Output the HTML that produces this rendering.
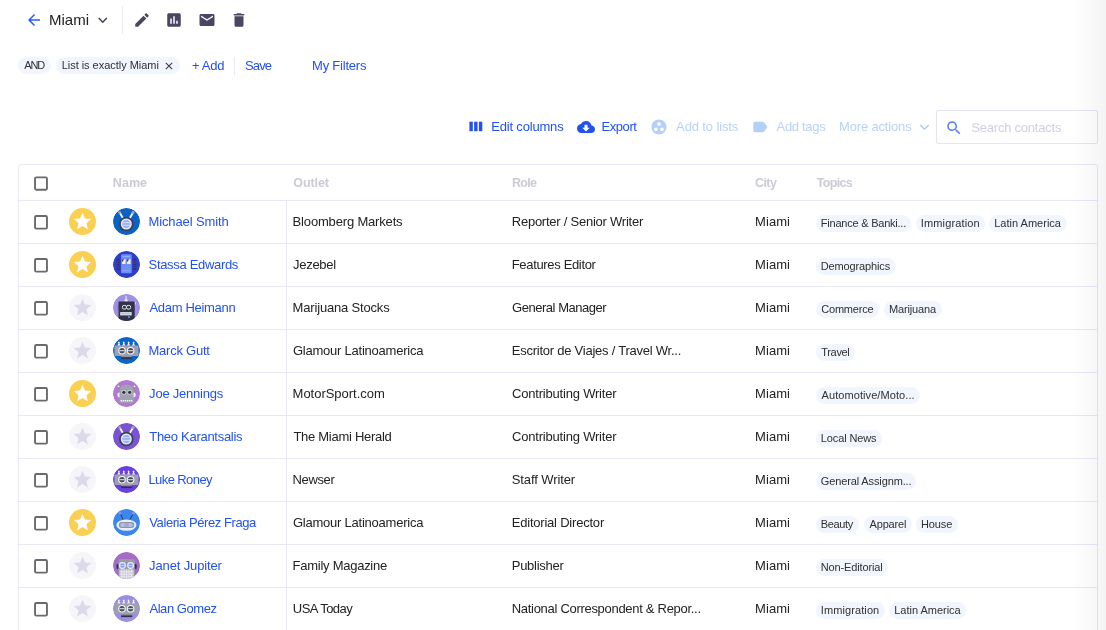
<!DOCTYPE html>
<html><head><meta charset="utf-8">
<style>
*{box-sizing:border-box;margin:0;padding:0}
html,body{width:1106px;height:630px;overflow:hidden;background:#fff}
body{font-family:"Liberation Sans",sans-serif;color:#212121;position:relative;font-size:13px}
.abs{position:absolute;white-space:nowrap}
.t{position:absolute;white-space:nowrap;line-height:16px;font-size:13px}
.title{font-size:15px;line-height:18px;color:#222}
.blue,.name{color:#2251f0}
.lblue{color:#b8d2fb}
.ph{color:#cfcfe6}
.hdr{font-weight:bold;font-size:12.500px;color:#cbcbd5}
.chiptxt,.tagtxt{font-size:11px;color:#303030}
.cell{color:#222}
.hl{position:absolute;left:19px;width:1078px;height:1px;background:#e8e8f6}
.cb{position:absolute;left:34px;width:14px;height:14px;border:2px solid #5f5f5f;border-radius:2px;background:#fff}
.star{position:absolute;left:69px;width:27px;height:27px;border-radius:50%}
.star.on{background:#fad053}
.star.off{background:#f6f5f9}
.av{position:absolute;left:113px;width:27px;height:27px;border-radius:50%;overflow:hidden}
.pill{position:absolute;height:17px;border-radius:8.500px;background:#f1f5fd}
</style></head><body>

<!-- top bar -->
<svg class="abs" style="left:25px;top:11px" width="18" height="18" viewBox="0 0 24 24"><path d="M20 11H7.830l5.590-5.590L12 4l-8 8 8 8 1.410-1.410L7.830 13H20v-2z" fill="#2b5bf5"/></svg>
<svg class="abs" style="left:96px;top:15px" width="13" height="10" viewBox="0 0 13 10"><path d="M2.700 3l4.050 4.200L10.800 3" fill="none" stroke="#3f3856" stroke-width="1.400"/></svg>
<div class="abs" style="left:122px;top:6px;width:1px;height:28px;background:#ebebf7"></div>
<svg class="abs" style="left:132.850px;top:10.850px" width="18" height="18" viewBox="0 0 24 24"><path d="M3 17.250V21h3.750L17.810 9.940l-3.750-3.750L3 17.250zM20.710 7.040c.39-.39.39-1.020 0-1.410l-2.340-2.340c-.39-.39-1.020-.39-1.410 0l-1.830 1.830 3.750 3.750 1.830-1.830z" fill="#4a4560"/></svg>
<svg class="abs" style="left:165.100px;top:10.750px" width="18" height="18" viewBox="0 0 24 24"><path d="M19 3H5c-1.100 0-2 .9-2 2v14c0 1.100.9 2 2 2h14c1.100 0 2-.9 2-2V5c0-1.100-.9-2-2-2zM9 17H7v-7h2v7zm4 0h-2V7h2v10zm4 0h-2v-4h2v4z" fill="#4a4560"/></svg>
<svg class="abs" style="left:197.650px;top:11px" width="18" height="18" viewBox="0 0 24 24"><path d="M20 4H4c-1.100 0-1.990.9-1.990 2L2 18c0 1.100.9 2 2 2h16c1.100 0 2-.9 2-2V6c0-1.100-.9-2-2-2zm0 4l-8 5-8-5V6l8 5 8-5v2z" fill="#4a4560"/></svg>
<svg class="abs" style="left:230.400px;top:10.750px" width="18" height="18" viewBox="0 0 24 24"><path d="M6 19c0 1.100.9 2 2 2h8c1.100 0 2-.9 2-2V7H6v12zM19 4h-3.500l-1-1h-5l-1 1H5v2h14V4z" fill="#4a4560"/></svg>

<!-- filters -->
<div class="pill" style="left:18px;top:57px;width:33px"></div>
<div class="pill" style="left:56px;top:57px;width:124px"></div>
<svg class="abs" style="left:163.700px;top:60.500px" width="10" height="10" viewBox="0 0 10 10"><path d="M1.800 1.800l6.400 6.400M8.200 1.800l-6.400 6.400" stroke="#3f3856" stroke-width="1.100" fill="none"/></svg>
<div class="abs" style="left:234px;top:57px;width:1px;height:18px;background:#e8e8f6"></div>

<!-- toolbar -->
<svg class="abs" style="left:469px;top:121px" width="14" height="11" viewBox="0 0 14 11"><rect x="0.400" y="0.700" width="3.400" height="9.500" fill="#2251f0"/><rect x="5.150" y="0.700" width="3.400" height="9.500" fill="#2251f0"/><rect x="9.900" y="0.700" width="3.400" height="9.500" fill="#2251f0"/></svg>
<svg class="abs" style="left:576.800px;top:117.900px" width="18" height="18" viewBox="0 0 24 24"><path d="M19.350 10.040C18.670 6.590 15.640 4 12 4 9.110 4 6.600 5.640 5.350 8.040 2.340 8.360 0 10.910 0 14c0 3.310 2.690 6 6 6h13c2.760 0 5-2.240 5-5 0-2.640-2.050-4.780-4.650-4.960zM17 13l-5 5-5-5h3V9h4v4h3z" fill="#2251f0"/></svg>
<svg class="abs" style="left:650.400px;top:117.700px" width="18" height="18" viewBox="0 0 24 24"><path d="M12 2C6.480 2 2 6.480 2 12s4.480 10 10 10 10-4.480 10-10S17.520 2 12 2zM8 17.500c-1.380 0-2.500-1.120-2.500-2.500s1.120-2.500 2.500-2.500 2.500 1.120 2.500 2.500-1.120 2.500-2.500 2.500zM9.500 8c0-1.380 1.120-2.500 2.500-2.500s2.500 1.120 2.500 2.500-1.120 2.500-2.500 2.500S9.500 9.380 9.500 8zm6.500 9.500c-1.380 0-2.500-1.120-2.500-2.500s1.120-2.500 2.500-2.500 2.500 1.120 2.500 2.500-1.120 2.500-2.500 2.500z" fill="#b3d0fb"/></svg>
<svg class="abs" style="left:751px;top:118.200px" width="18" height="18" viewBox="0 0 24 24"><path d="M17.630 5.840C17.270 5.330 16.670 5 16 5L5 5.010C3.900 5.010 3 5.900 3 7v10c0 1.100.9 1.990 2 1.990L16 19c.67 0 1.270-.33 1.630-.84L22 12l-4.370-6.160z" fill="#b3d0fb"/></svg>
<svg class="abs" style="left:918px;top:122px" width="13" height="10" viewBox="0 0 13 10"><path d="M2.200 3l4.250 4.200L10.700 3" fill="none" stroke="#a6c6fa" stroke-width="1.300"/></svg>
<div class="abs" style="left:936px;top:110px;width:162px;height:34px;border:1px solid #e4e4f4;border-radius:2px"></div>
<svg class="abs" style="left:944.500px;top:118.500px" width="18" height="18" viewBox="0 0 24 24"><path d="M15.500 14h-.79l-.28-.27C15.410 12.590 16 11.110 16 9.500 16 5.910 13.090 3 9.500 3S3 5.910 3 9.500 5.910 16 9.500 16c1.610 0 3.090-.59 4.230-1.570l.27.28v.79l5 4.990L20.490 19l-4.990-5zm-6 0C7.010 14 5 11.990 5 9.500S7.010 5 9.500 5 14 7.010 14 9.500 11.990 14 9.500 14z" fill="#5681f3"/></svg>

<!-- table -->
<div class="abs" style="left:18px;top:164px;width:1080px;height:480px;border:1px solid #e8e8f6;border-radius:3px"></div>
<div class="hl" style="top:200px"></div>
<div class="abs" style="left:286px;top:201px;width:1px;height:429px;background:#e8e8f6"></div>
<svg class="abs" style="left:33px;top:175px" width="16" height="17"><rect x="2.050" y="2.35" width="11.900" height="12.40" rx="1.200" fill="#fff" stroke="#6a6a6a" stroke-width="1.900"/></svg>
<div class="hl" style="top:243px"></div>
<svg class="abs" style="left:33px;top:214px" width="16" height="17"><rect x="2.050" y="2.05" width="11.900" height="12.60" rx="1.200" fill="#fff" stroke="#6a6a6a" stroke-width="1.900"/></svg>
<div class="star on" style="top:208px"><svg style="position:absolute;left:3px;top:2.900px" width="21" height="21" viewBox="0 0 24 24"><path d="M12 17.270L18.180 21l-1.640-7.030L22 9.240l-7.190-.61L12 2 9.190 8.630 2 9.240l5.460 4.730L5.820 21z" fill="#fdfcff"/></svg></div>
<div class="av" style="top:208px"><svg width="27" height="27" viewBox="0 0 27 27"><circle cx="13.500" cy="13.500" r="13.500" fill="#0b62c4"/><path d="M6.800 4.800L10.400 11M19.900 4.800L16.300 11" stroke="#f4f4fa" stroke-width="1.900" fill="none"/><circle cx="6.600" cy="4.500" r="1.400" fill="#a4a4ad"/><circle cx="20.100" cy="4.500" r="1.400" fill="#a4a4ad"/><circle cx="13.300" cy="16" r="7.300" fill="#3b4256"/><circle cx="13.300" cy="16" r="5.500" fill="#ecebfb"/><circle cx="13.300" cy="16" r="4.200" fill="#9fb2ff"/><path d="M9.600 14.600h7.400M9.600 17.400h7.400" stroke="#d6defF" stroke-width="0.900"/></svg></div>
<div class="hl" style="top:286px"></div>
<svg class="abs" style="left:33px;top:257px" width="16" height="17"><rect x="2.050" y="2.05" width="11.900" height="12.60" rx="1.200" fill="#fff" stroke="#6a6a6a" stroke-width="1.900"/></svg>
<div class="star on" style="top:251px"><svg style="position:absolute;left:3px;top:2.900px" width="21" height="21" viewBox="0 0 24 24"><path d="M12 17.270L18.180 21l-1.640-7.030L22 9.240l-7.190-.61L12 2 9.190 8.630 2 9.240l5.460 4.730L5.820 21z" fill="#fdfcff"/></svg></div>
<div class="av" style="top:251px"><svg width="27" height="27" viewBox="0 0 27 27"><circle cx="13.500" cy="13.500" r="13.500" fill="#2f3fc8"/><rect x="8.100" y="3.200" width="10.600" height="19.100" rx="0.800" fill="#6d8df7"/><rect x="3.900" y="7.800" width="2.700" height="10.900" fill="#2a2f6e"/><rect x="20.400" y="7.800" width="2.700" height="10.900" fill="#2a2f6e"/><path d="M3.900 10h2.700M3.900 12.200h2.700M3.900 14.400h2.700M3.900 16.600h2.700M20.400 10h2.700M20.400 12.200h2.700M20.400 14.400h2.700M20.400 16.600h2.700" stroke="#5a5f9a" stroke-width="0.600"/><rect x="9" y="8.200" width="3.600" height="4.800" fill="#f4ecd8"/><rect x="14" y="8.200" width="3.600" height="4.800" fill="#f4ecd8"/><path d="M9 8.200h2.200l-2.200 3zM14 8.200h2.200l-2.200 3z" fill="#3a3f70"/><path d="M9.500 5.500h7.800M9.500 19.800h7.800" stroke="#a9bcfb" stroke-width="1" stroke-dasharray="1.200 0.800"/></svg></div>
<div class="hl" style="top:329px"></div>
<svg class="abs" style="left:33px;top:300px" width="16" height="17"><rect x="2.050" y="2.05" width="11.900" height="12.60" rx="1.200" fill="#fff" stroke="#6a6a6a" stroke-width="1.900"/></svg>
<div class="star off" style="top:294px"><svg style="position:absolute;left:3px;top:2.900px" width="21" height="21" viewBox="0 0 24 24"><path d="M12 17.270L18.180 21l-1.640-7.030L22 9.240l-7.190-.61L12 2 9.190 8.630 2 9.240l5.460 4.730L5.820 21z" fill="#dcdae9"/></svg></div>
<div class="av" style="top:294px"><svg width="27" height="27" viewBox="0 0 27 27"><circle cx="13.500" cy="13.500" r="13.500" fill="#a08fe3"/><rect x="12.600" y="1.800" width="1" height="5" fill="#f1f1fb"/><rect x="11.600" y="5.600" width="3" height="2" fill="#f1f1fb"/><rect x="4" y="11" width="1.600" height="5" fill="#8d8fa8"/><rect x="21.700" y="7.800" width="1" height="2.800" fill="#f1f1fb"/><rect x="5.500" y="7.600" width="16.200" height="20" rx="1" fill="#2f3547"/><rect x="9.300" y="11.400" width="4.200" height="3.700" rx="1.700" fill="none" stroke="#e4e4ee" stroke-width="1"/><rect x="13.500" y="11.400" width="4.200" height="3.700" rx="1.700" fill="none" stroke="#e4e4ee" stroke-width="1"/><rect x="7.200" y="18.100" width="11.500" height="3.300" fill="#e4e4ee"/><rect x="8.200" y="19.200" width="9.500" height="1.100" fill="#b9bac6"/><rect x="15" y="21.400" width="2" height="2.600" fill="#4b7df0"/></svg></div>
<div class="hl" style="top:372px"></div>
<svg class="abs" style="left:33px;top:343px" width="16" height="17"><rect x="2.050" y="2.05" width="11.900" height="12.60" rx="1.200" fill="#fff" stroke="#6a6a6a" stroke-width="1.900"/></svg>
<div class="star off" style="top:337px"><svg style="position:absolute;left:3px;top:2.900px" width="21" height="21" viewBox="0 0 24 24"><path d="M12 17.270L18.180 21l-1.640-7.030L22 9.240l-7.190-.61L12 2 9.190 8.630 2 9.240l5.460 4.730L5.820 21z" fill="#dcdae9"/></svg></div>
<div class="av" style="top:337px"><svg width="27" height="27" viewBox="0 0 27 27"><circle cx="13.500" cy="13.500" r="13.500" fill="#0a66c8"/><path d="M4.300 8.700l1.100-2.400a.9.900 0 1 1 1 0l1.100 2.400zM9.200 8.700l1.100-2.400a.9.900 0 1 1 1 0l1.100 2.400zM14 8.700l1.100-2.400a.9.900 0 1 1 1 0l1.100 2.400zM19 8.700l1.100-2.400a.9.900 0 1 1 1 0l1.100 2.400z" fill="#f4f4fb"/><rect x="1.500" y="8.500" width="24" height="10.500" fill="#9ea1ad"/><path d="M8 19h11.300l-1 1.300H9z" fill="#8b8e9b"/><circle cx="9" cy="13.700" r="3.800" fill="#f3f3fa"/><circle cx="17.600" cy="13.700" r="3.800" fill="#f3f3fa"/><circle cx="9" cy="13.700" r="2.700" fill="#4a4f60"/><circle cx="17.600" cy="13.700" r="2.700" fill="#4a4f60"/><path d="M6.500 13.700h5M15.100 13.700h5" stroke="#f3f3fa" stroke-width="0.900"/><rect x="8" y="20.400" width="11.300" height="1.700" fill="#2d3350"/></svg></div>
<div class="hl" style="top:415px"></div>
<svg class="abs" style="left:33px;top:386px" width="16" height="17"><rect x="2.050" y="2.05" width="11.900" height="12.60" rx="1.200" fill="#fff" stroke="#6a6a6a" stroke-width="1.900"/></svg>
<div class="star on" style="top:380px"><svg style="position:absolute;left:3px;top:2.900px" width="21" height="21" viewBox="0 0 24 24"><path d="M12 17.270L18.180 21l-1.640-7.030L22 9.240l-7.190-.61L12 2 9.190 8.630 2 9.240l5.460 4.730L5.820 21z" fill="#fdfcff"/></svg></div>
<div class="av" style="top:380px"><svg width="27" height="27" viewBox="0 0 27 27"><circle cx="13.500" cy="13.500" r="13.500" fill="#b478d2"/><path d="M5.500 6.500v4M21.500 6.500v4" stroke="#8b8e9b" stroke-width="1"/><circle cx="5.500" cy="6.300" r="0.900" fill="#f1f1fb"/><circle cx="21.500" cy="6.300" r="0.900" fill="#f1f1fb"/><circle cx="6.700" cy="15" r="2.400" fill="#f1f1fb"/><circle cx="20.400" cy="15" r="2.400" fill="#f1f1fb"/><path d="M6.500 22.700V10.700a6 6 0 0 1 6-6h2.100a6 6 0 0 1 6 6V22.700z" fill="#a0a3ae"/><circle cx="10.800" cy="12.300" r="2.500" fill="#c9cbd4"/><circle cx="16.700" cy="12.300" r="2.500" fill="#c9cbd4"/><circle cx="10.800" cy="12.300" r="1.600" fill="#2f3547"/><circle cx="16.700" cy="12.300" r="1.600" fill="#2f3547"/><path d="M7.600 20.700h11.800" stroke="#f1f1fb" stroke-width="1.600" stroke-dasharray="1.500 0.600"/></svg></div>
<div class="hl" style="top:458px"></div>
<svg class="abs" style="left:33px;top:429px" width="16" height="17"><rect x="2.050" y="2.05" width="11.900" height="12.60" rx="1.200" fill="#fff" stroke="#6a6a6a" stroke-width="1.900"/></svg>
<div class="star off" style="top:423px"><svg style="position:absolute;left:3px;top:2.900px" width="21" height="21" viewBox="0 0 24 24"><path d="M12 17.270L18.180 21l-1.640-7.030L22 9.240l-7.190-.61L12 2 9.190 8.630 2 9.240l5.460 4.730L5.820 21z" fill="#dcdae9"/></svg></div>
<div class="av" style="top:423px"><svg width="27" height="27" viewBox="0 0 27 27"><circle cx="13.500" cy="13.500" r="13.500" fill="#7a52d6"/><path d="M6.800 4.800L10.400 11M19.900 4.800L16.300 11" stroke="#f4f4fa" stroke-width="1.900" fill="none"/><circle cx="6.600" cy="4.500" r="1.400" fill="#a4a4ad"/><circle cx="20.100" cy="4.500" r="1.400" fill="#a4a4ad"/><circle cx="13.300" cy="16" r="7.300" fill="#3b4256"/><circle cx="13.300" cy="16" r="5.500" fill="#ecebfb"/><circle cx="13.300" cy="16" r="4.200" fill="#9fb2ff"/><path d="M9.600 14.600h7.400M9.600 17.400h7.400" stroke="#d6defF" stroke-width="0.900"/></svg></div>
<div class="hl" style="top:501px"></div>
<svg class="abs" style="left:33px;top:472px" width="16" height="17"><rect x="2.050" y="2.05" width="11.900" height="12.60" rx="1.200" fill="#fff" stroke="#6a6a6a" stroke-width="1.900"/></svg>
<div class="star off" style="top:466px"><svg style="position:absolute;left:3px;top:2.900px" width="21" height="21" viewBox="0 0 24 24"><path d="M12 17.270L18.180 21l-1.640-7.030L22 9.240l-7.190-.61L12 2 9.190 8.630 2 9.240l5.460 4.730L5.820 21z" fill="#dcdae9"/></svg></div>
<div class="av" style="top:466px"><svg width="27" height="27" viewBox="0 0 27 27"><circle cx="13.500" cy="13.500" r="13.500" fill="#6a40e0"/><path d="M4.300 8.700l1.100-2.400a.9.900 0 1 1 1 0l1.100 2.400zM9.200 8.700l1.100-2.400a.9.900 0 1 1 1 0l1.100 2.400zM14 8.700l1.100-2.400a.9.900 0 1 1 1 0l1.100 2.400zM19 8.700l1.100-2.400a.9.900 0 1 1 1 0l1.100 2.400z" fill="#f4f4fb"/><rect x="1.500" y="8.500" width="24" height="10.500" fill="#9ea1ad"/><path d="M8 19h11.300l-1 1.300H9z" fill="#8b8e9b"/><circle cx="9" cy="13.700" r="3.800" fill="#f3f3fa"/><circle cx="17.600" cy="13.700" r="3.800" fill="#f3f3fa"/><circle cx="9" cy="13.700" r="2.700" fill="#4a4f60"/><circle cx="17.600" cy="13.700" r="2.700" fill="#4a4f60"/><path d="M6.500 13.700h5M15.100 13.700h5" stroke="#f3f3fa" stroke-width="0.900"/><rect x="8" y="20.400" width="11.300" height="1.700" fill="#2d3350"/></svg></div>
<div class="hl" style="top:544px"></div>
<svg class="abs" style="left:33px;top:515px" width="16" height="17"><rect x="2.050" y="2.05" width="11.900" height="12.60" rx="1.200" fill="#fff" stroke="#6a6a6a" stroke-width="1.900"/></svg>
<div class="star on" style="top:509px"><svg style="position:absolute;left:3px;top:2.900px" width="21" height="21" viewBox="0 0 24 24"><path d="M12 17.270L18.180 21l-1.640-7.030L22 9.240l-7.190-.61L12 2 9.190 8.630 2 9.240l5.460 4.730L5.820 21z" fill="#fdfcff"/></svg></div>
<div class="av" style="top:509px"><svg width="27" height="27" viewBox="0 0 27 27"><circle cx="13.500" cy="13.500" r="13.500" fill="#3b87ee"/><path d="M7.500 5.200L10.100 10.400M20 5.200L17 10.400" stroke="#2f3547" stroke-width="1" fill="none"/><circle cx="7" cy="4.200" r="1.400" fill="#8f8ff0"/><circle cx="20.400" cy="4.200" r="1.400" fill="#8f8ff0"/><ellipse cx="13.400" cy="16.100" rx="10.100" ry="5.700" fill="#eceef6"/><rect x="5.800" y="13" width="15.500" height="6" rx="3" fill="#8d93a8"/><rect x="6.800" y="14" width="13.500" height="4" rx="2" fill="#a5abc0"/><circle cx="9.800" cy="16" r="1.900" fill="#a9c0ff"/><circle cx="17.300" cy="16" r="1.900" fill="#a9c0ff"/></svg></div>
<div class="hl" style="top:587px"></div>
<svg class="abs" style="left:33px;top:558px" width="16" height="17"><rect x="2.050" y="2.05" width="11.900" height="12.60" rx="1.200" fill="#fff" stroke="#6a6a6a" stroke-width="1.900"/></svg>
<div class="star off" style="top:552px"><svg style="position:absolute;left:3px;top:2.900px" width="21" height="21" viewBox="0 0 24 24"><path d="M12 17.270L18.180 21l-1.640-7.030L22 9.240l-7.190-.61L12 2 9.190 8.630 2 9.240l5.460 4.730L5.820 21z" fill="#dcdae9"/></svg></div>
<div class="av" style="top:552px"><svg width="27" height="27" viewBox="0 0 27 27"><circle cx="13.500" cy="13.500" r="13.500" fill="#a56cc6"/><rect x="3.500" y="12" width="2.200" height="5" rx="1" fill="#2f3547"/><rect x="21.500" y="12" width="2.200" height="5" rx="1" fill="#2f3547"/><path d="M5.500 27V8.900a2 2 0 0 1 2-2h12.200a2 2 0 0 1 2 2V27z" fill="#9a9ca8"/><rect x="6.500" y="17.400" width="14.200" height="10" fill="#c9c9d2"/><path d="M6.500 19.800h14.200M6.500 22.300h14.200M6.500 24.800h14.200M8.900 17.400v10M11.300 17.400v10M13.600 17.400v10M16 17.400v10M18.400 17.400v10" stroke="#f1f1f8" stroke-width="0.600"/><circle cx="9.400" cy="13.500" r="3.400" fill="#eeeef8"/><circle cx="17.600" cy="13.500" r="3.400" fill="#eeeef8"/><circle cx="9.400" cy="13.500" r="2.300" fill="#7f9bff"/><circle cx="17.600" cy="13.500" r="2.300" fill="#7f9bff"/><path d="M7.100 13.500h4.600M15.300 13.500h4.600" stroke="#dfe6ff" stroke-width="0.700"/></svg></div>
<div class="hl" style="top:630px"></div>
<svg class="abs" style="left:33px;top:601px" width="16" height="17"><rect x="2.050" y="2.05" width="11.900" height="12.60" rx="1.200" fill="#fff" stroke="#6a6a6a" stroke-width="1.900"/></svg>
<div class="star off" style="top:595px"><svg style="position:absolute;left:3px;top:2.900px" width="21" height="21" viewBox="0 0 24 24"><path d="M12 17.270L18.180 21l-1.640-7.030L22 9.240l-7.190-.61L12 2 9.190 8.630 2 9.240l5.460 4.730L5.820 21z" fill="#dcdae9"/></svg></div>
<div class="av" style="top:595px"><svg width="27" height="27" viewBox="0 0 27 27"><circle cx="13.500" cy="13.500" r="13.500" fill="#9b8fe0"/><path d="M4.300 8.700l1.100-2.400a.9.900 0 1 1 1 0l1.100 2.400zM9.200 8.700l1.100-2.400a.9.900 0 1 1 1 0l1.100 2.400zM14 8.700l1.100-2.400a.9.900 0 1 1 1 0l1.100 2.400zM19 8.700l1.100-2.400a.9.900 0 1 1 1 0l1.100 2.400z" fill="#f4f4fb"/><rect x="1.500" y="8.500" width="24" height="10.500" fill="#9ea1ad"/><path d="M8 19h11.300l-1 1.300H9z" fill="#8b8e9b"/><circle cx="9" cy="13.700" r="3.800" fill="#f3f3fa"/><circle cx="17.600" cy="13.700" r="3.800" fill="#f3f3fa"/><circle cx="9" cy="13.700" r="2.700" fill="#4a4f60"/><circle cx="17.600" cy="13.700" r="2.700" fill="#4a4f60"/><path d="M6.500 13.700h5M15.100 13.700h5" stroke="#f3f3fa" stroke-width="0.900"/><rect x="8" y="20.400" width="11.300" height="1.700" fill="#2d3350"/></svg></div>
<div class="pill" style="left:816px;top:215px;width:95px"></div>
<div class="pill" style="left:916px;top:215px;width:69px"></div>
<div class="pill" style="left:989px;top:215px;width:78px"></div>
<div class="pill" style="left:816px;top:258px;width:80px"></div>
<div class="pill" style="left:816px;top:301px;width:63px"></div>
<div class="pill" style="left:884px;top:301px;width:58px"></div>
<div class="pill" style="left:816px;top:344px;width:39px"></div>
<div class="pill" style="left:816px;top:387px;width:104px"></div>
<div class="pill" style="left:816px;top:430px;width:66px"></div>
<div class="pill" style="left:816px;top:473px;width:100px"></div>
<div class="pill" style="left:816px;top:516px;width:43px"></div>
<div class="pill" style="left:864px;top:516px;width:48px"></div>
<div class="pill" style="left:916px;top:516px;width:42px"></div>
<div class="pill" style="left:816px;top:559px;width:72px"></div>
<div class="pill" style="left:816px;top:602px;width:69px"></div>
<div class="pill" style="left:889px;top:602px;width:77px"></div>
<div style="position:absolute;left:0;top:0;width:1106px;height:630px;will-change:transform">
<div id="title" class="t title" style="left:49.00px;top:10.50px;letter-spacing:-0.007px">Miami</div>
<div id="and" class="t chiptxt" style="left:24.35px;top:56.50px;letter-spacing:-1.221px">AND</div>
<div id="flt" class="t chiptxt" style="left:61.66px;top:56.50px;letter-spacing:-0.028px">List is exactly Miami</div>
<div id="add" class="t blue" style="left:191.95px;top:57.50px;letter-spacing:-0.294px">+ Add</div>
<div id="save" class="t blue" style="left:245.09px;top:57.50px;letter-spacing:-0.898px">Save</div>
<div id="myf" class="t blue" style="left:312.03px;top:57.50px;letter-spacing:-0.209px">My Filters</div>
<div id="editc" class="t blue" style="left:491.21px;top:118.50px;letter-spacing:-0.180px">Edit columns</div>
<div id="export" class="t blue" style="left:601.45px;top:118.50px;letter-spacing:-0.408px">Export</div>
<div id="addl" class="t lblue" style="left:676.11px;top:118.50px;letter-spacing:-0.129px">Add to lists</div>
<div id="addt" class="t lblue" style="left:776.57px;top:118.50px;letter-spacing:-0.317px">Add tags</div>
<div id="more" class="t lblue" style="left:839.03px;top:118.50px;letter-spacing:-0.160px">More actions</div>
<div id="search" class="t ph" style="left:971.35px;top:119.50px;letter-spacing:-0.225px">Search contacts</div>
<div id="hname" class="t hdr" style="left:112.84px;top:174.50px;letter-spacing:0.039px">Name</div>
<div id="houtlet" class="t hdr" style="left:293.26px;top:174.50px;letter-spacing:-0.086px">Outlet</div>
<div id="hrole" class="t hdr" style="left:512.00px;top:174.50px;letter-spacing:-0.743px">Role</div>
<div id="hcity" class="t hdr" style="left:754.89px;top:174.50px;letter-spacing:-0.515px">City</div>
<div id="htopics" class="t hdr" style="left:816.84px;top:174.50px;letter-spacing:-0.682px">Topics</div>
<div id="n0" class="t name" style="left:148.45px;top:213.50px;letter-spacing:-0.111px">Michael Smith</div>
<div id="o0" class="t cell" style="left:292.61px;top:213.50px;letter-spacing:-0.169px">Bloomberg Markets</div>
<div id="r0" class="t cell" style="left:511.76px;top:213.50px;letter-spacing:-0.239px">Reporter / Senior Writer</div>
<div id="c0" class="t cell" style="left:755.03px;top:213.50px;letter-spacing:0.075px">Miami</div>
<div id="t0_0" class="t tagtxt" style="left:820.82px;top:214.50px;letter-spacing:-0.225px">Finance &amp; Banki...</div>
<div id="t0_1" class="t tagtxt" style="left:920.79px;top:214.50px;letter-spacing:0.134px">Immigration</div>
<div id="t0_2" class="t tagtxt" style="left:994.18px;top:214.50px;letter-spacing:0.013px">Latin America</div>
<div id="n1" class="t name" style="left:148.56px;top:256.50px;letter-spacing:-0.316px">Stassa Edwards</div>
<div id="o1" class="t cell" style="left:293.05px;top:256.50px;letter-spacing:-0.296px">Jezebel</div>
<div id="r1" class="t cell" style="left:511.76px;top:256.50px;letter-spacing:-0.337px">Features Editor</div>
<div id="c1" class="t cell" style="left:755.03px;top:256.50px;letter-spacing:0.075px">Miami</div>
<div id="t1_0" class="t tagtxt" style="left:820.82px;top:257.50px;letter-spacing:-0.144px">Demographics</div>
<div id="n2" class="t name" style="left:149.43px;top:299.50px;letter-spacing:-0.301px">Adam Heimann</div>
<div id="o2" class="t cell" style="left:292.61px;top:299.50px;letter-spacing:-0.178px">Marijuana Stocks</div>
<div id="r2" class="t cell" style="left:512.05px;top:299.50px;letter-spacing:-0.470px">General Manager</div>
<div id="c2" class="t cell" style="left:755.03px;top:299.50px;letter-spacing:0.075px">Miami</div>
<div id="t2_0" class="t tagtxt" style="left:821.20px;top:300.50px;letter-spacing:-0.186px">Commerce</div>
<div id="t2_1" class="t tagtxt" style="left:889.00px;top:300.50px;letter-spacing:-0.149px">Marijuana</div>
<div id="n3" class="t name" style="left:148.45px;top:342.50px;letter-spacing:-0.227px">Marck Gutt</div>
<div id="o3" class="t cell" style="left:292.95px;top:342.50px;letter-spacing:-0.231px">Glamour Latinoamerica</div>
<div id="r3" class="t cell" style="left:511.76px;top:342.50px;letter-spacing:-0.239px">Escritor de Viajes / Travel Wr...</div>
<div id="c3" class="t cell" style="left:755.03px;top:342.50px;letter-spacing:0.075px">Miami</div>
<div id="t3_0" class="t tagtxt" style="left:821.28px;top:343.50px;letter-spacing:-0.325px">Travel</div>
<div id="n4" class="t name" style="left:149.11px;top:385.50px;letter-spacing:-0.223px">Joe Jennings</div>
<div id="o4" class="t cell" style="left:292.61px;top:385.50px;letter-spacing:-0.027px">MotorSport.com</div>
<div id="r4" class="t cell" style="left:512.05px;top:385.50px;letter-spacing:-0.200px">Contributing Writer</div>
<div id="c4" class="t cell" style="left:755.03px;top:385.50px;letter-spacing:0.075px">Miami</div>
<div id="t4_0" class="t tagtxt" style="left:821.55px;top:386.50px;letter-spacing:0.079px">Automotive/Moto...</div>
<div id="n5" class="t name" style="left:149.25px;top:428.50px;letter-spacing:-0.284px">Theo Karantsalis</div>
<div id="o5" class="t cell" style="left:293.39px;top:428.50px;letter-spacing:-0.274px">The Miami Herald</div>
<div id="r5" class="t cell" style="left:512.05px;top:428.50px;letter-spacing:-0.200px">Contributing Writer</div>
<div id="c5" class="t cell" style="left:755.03px;top:428.50px;letter-spacing:0.075px">Miami</div>
<div id="t5_0" class="t tagtxt" style="left:820.82px;top:429.50px;letter-spacing:-0.123px">Local News</div>
<div id="n6" class="t name" style="left:148.45px;top:471.50px;letter-spacing:-0.585px">Luke Roney</div>
<div id="o6" class="t cell" style="left:292.61px;top:471.50px;letter-spacing:-0.391px">Newser</div>
<div id="r6" class="t cell" style="left:511.76px;top:471.50px;letter-spacing:-0.099px">Staff Writer</div>
<div id="c6" class="t cell" style="left:755.03px;top:471.50px;letter-spacing:0.075px">Miami</div>
<div id="t6_0" class="t tagtxt" style="left:820.80px;top:472.50px;letter-spacing:-0.126px">General Assignm...</div>
<div id="n7" class="t name" style="left:149.35px;top:514.50px;letter-spacing:-0.428px">Valeria Pérez Fraga</div>
<div id="o7" class="t cell" style="left:292.95px;top:514.50px;letter-spacing:-0.231px">Glamour Latinoamerica</div>
<div id="r7" class="t cell" style="left:511.76px;top:514.50px;letter-spacing:-0.213px">Editorial Director</div>
<div id="c7" class="t cell" style="left:755.03px;top:514.50px;letter-spacing:0.075px">Miami</div>
<div id="t7_0" class="t tagtxt" style="left:820.82px;top:515.50px;letter-spacing:-0.358px">Beauty</div>
<div id="t7_1" class="t tagtxt" style="left:869.55px;top:515.50px;letter-spacing:-0.176px">Apparel</div>
<div id="t7_2" class="t tagtxt" style="left:920.94px;top:515.50px;letter-spacing:-0.096px">House</div>
<div id="n8" class="t name" style="left:149.11px;top:557.50px;letter-spacing:-0.137px">Janet Jupiter</div>
<div id="o8" class="t cell" style="left:292.61px;top:557.50px;letter-spacing:-0.262px">Family Magazine</div>
<div id="r8" class="t cell" style="left:511.76px;top:557.50px;letter-spacing:-0.280px">Publisher</div>
<div id="c8" class="t cell" style="left:755.03px;top:557.50px;letter-spacing:0.075px">Miami</div>
<div id="t8_0" class="t tagtxt" style="left:820.82px;top:558.50px;letter-spacing:-0.143px">Non-Editorial</div>
<div id="n9" class="t name" style="left:149.43px;top:600.50px;letter-spacing:-0.436px">Alan Gomez</div>
<div id="o9" class="t cell" style="left:292.79px;top:600.50px;letter-spacing:-0.506px">USA Today</div>
<div id="r9" class="t cell" style="left:511.76px;top:600.50px;letter-spacing:-0.296px">National Correspondent &amp; Repor...</div>
<div id="c9" class="t cell" style="left:755.03px;top:600.50px;letter-spacing:0.075px">Miami</div>
<div id="t9_0" class="t tagtxt" style="left:820.75px;top:601.50px;letter-spacing:0.102px">Immigration</div>
<div id="t9_1" class="t tagtxt" style="left:894.27px;top:601.50px;letter-spacing:-0.017px">Latin America</div>
</div>

<!-- right shade -->
<div class="abs" style="left:1072px;top:0;width:34px;height:630px;background:linear-gradient(to right,rgba(0,0,0,0),rgba(0,0,0,0.045))"></div>
</body></html>
